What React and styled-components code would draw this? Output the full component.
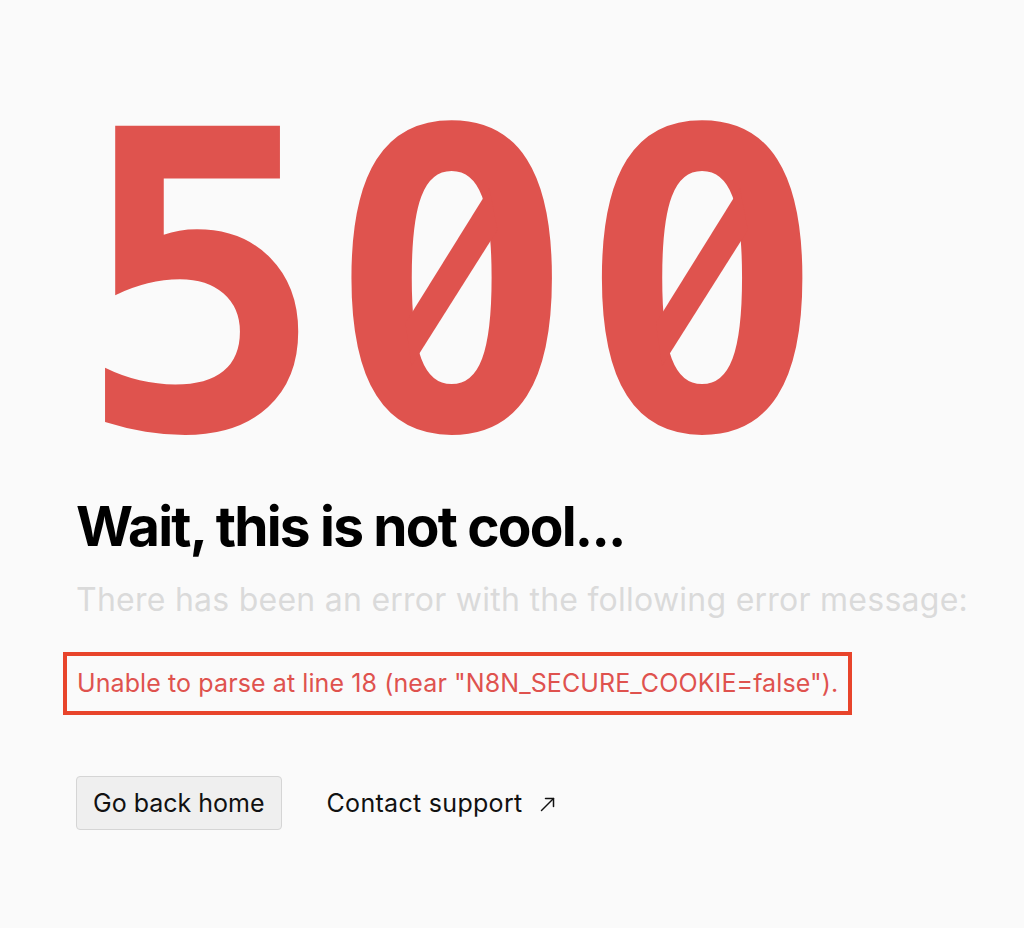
import React from "react";
import styled, { createGlobalStyle } from "styled-components";

const Global = createGlobalStyle`
  html, body { margin: 0; padding: 0; background: #fafafa; }
  body { font-family: Inter, "Noto Sans", sans-serif; }
`;

const Page = styled.main`
  min-height: 928px;
  box-sizing: border-box;
  padding: 77px 0 0 76px;
  display: flex;
  flex-direction: column;
  align-items: flex-start;
`;

const Code = styled.h1`
  margin: 0;
  font-family: "DejaVu Sans Mono", monospace;
  font-weight: 700;
  font-size: 416px;
  line-height: 1;
  color: #df534e;
  white-space: nowrap;
`;

/* Slashed zero (like Menlo): hide the dot of DejaVu's zero and draw a slash */
const Zero = styled.span`
  display: inline-block;
  position: relative;
  &::before {
    content: "";
    position: absolute;
    left: 92px;
    top: 170px;
    width: 65px;
    height: 66px;
    border-radius: 50%;
    background: #fafafa;
  }
  &::after {
    content: "";
    position: absolute;
    left: 0;
    top: 0;
    width: 100%;
    height: 100%;
    background: #df534e;
    clip-path: polygon(163px 111px, 171px 153px, 85px 289px, 79px 246px);
  }
`;

const Title = styled.h2`
  margin: 0;
  font-family: Inter, sans-serif;
  font-weight: 700;
  font-size: 55px;
  line-height: 66px;
  letter-spacing: -1.8px;
  color: #000;
`;

const Sub = styled.p`
  margin: 22px 0 0 0;
  font-size: 32px;
  line-height: 38px;
  letter-spacing: 0.25px;
  color: #dadada;
`;

const ErrorBox = styled.div`
  margin: 33px 0 0 -13px;
  border: 4px solid #e8442b;
  padding: 10px 10px;
  font-size: 25px;
  line-height: 35px;
  letter-spacing: 0.1px;
  color: #df524e;
`;

const Actions = styled.div`
  margin-top: 61px;
  display: flex;
  align-items: center;
  gap: 45px;
`;

const Button = styled.button`
  font-family: Inter, sans-serif;
  font-size: 25px;
  line-height: 30px;
  color: #111;
  background: #efefef;
  border: 1px solid #d5d5d5;
  border-radius: 4px;
  padding: 11px 16px;
  cursor: pointer;
`;

const Link = styled.a`
  font-size: 25px;
  line-height: 30px;
  letter-spacing: 0.3px;
  color: #111;
  text-decoration: none;
  display: flex;
  align-items: center;
  gap: 18px;
`;

const Arrow = styled.svg`
  width: 15px;
  height: 15px;
  margin-top: 2px;
`;

export default function App() {
  return (
    <>
      <Global />
      <Page>
        <Code>
          5<Zero>0</Zero><Zero>0</Zero>
        </Code>
        <Title>Wait, this is not cool...</Title>
        <Sub>There has been an error with the following error message:</Sub>
        <ErrorBox>Unable to parse at line 18 (near "N8N_SECURE_COOKIE=false").</ErrorBox>
        <Actions>
          <Button>Go back home</Button>
          <Link href="#">
            Contact support
            <Arrow viewBox="0 0 15 15" fill="none" stroke="#111" strokeWidth="1.5" strokeLinecap="round" strokeLinejoin="round">
              <path d="M1.5 13.5L13.5 1.5" />
              <path d="M5.5 1.5h8v8" />
            </Arrow>
          </Link>
        </Actions>
      </Page>
    </>
  );
}
